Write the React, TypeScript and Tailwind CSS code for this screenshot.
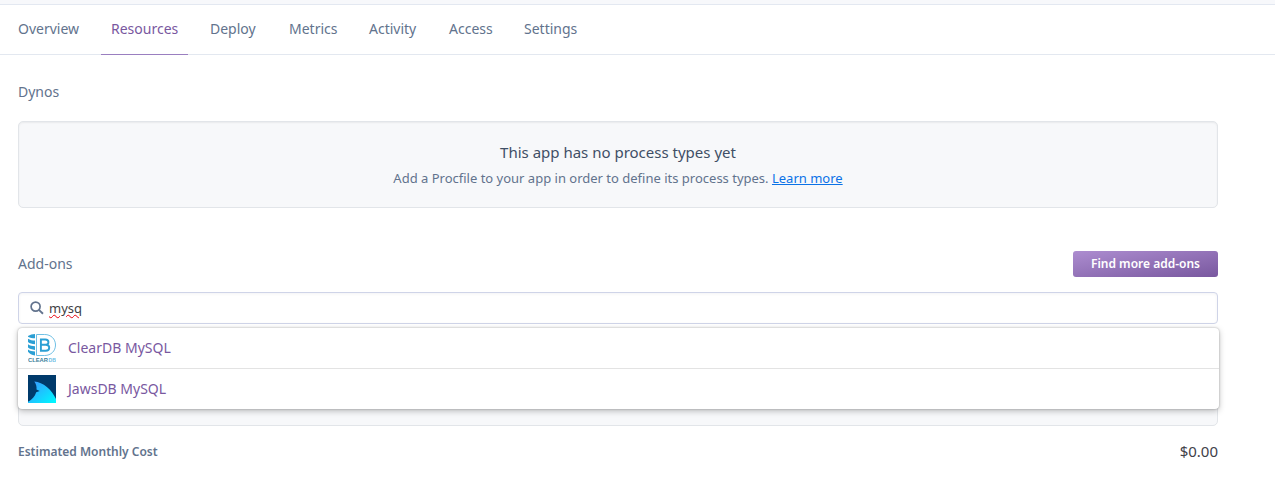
import React from "react";

const tabs = [
  { label: "Overview", width: "w-[61px]" },
  { label: "Resources", width: "w-[67px]", active: true },
  { label: "Deploy", width: "w-[47px]" },
  { label: "Metrics", width: "w-12" },
  { label: "Activity", width: "w-12" },
  { label: "Access", width: "w-[43px]" },
  { label: "Settings", width: "w-[54px]" },
];

function SearchIcon() {
  return (
    <svg className="h-3.5 w-3.5 shrink-0" viewBox="0 0 14 14" fill="none" stroke="#62738d" strokeWidth="1.7">
      <circle cx="5.6" cy="5.6" r="4.5" />
      <path d="M8.9 8.9 13 12.8" strokeWidth="1.9" />
    </svg>
  );
}

function ClearDbLogo() {
  return (
    <svg className="h-7 w-7 shrink-0" viewBox="0 0 28 28">
      <path d="M7 0v4.3C4.500 4.300 2 3.800 0 2.800V2C2 .8 4.500 0 7 0ZM0 4.800c2 1.300 4.500 1.800 7 1.800v3.700C4 10.200 1.500 9.300 0 8ZM0 10.200c2 1.400 4.500 1.900 7 2v3.700c-3-.1-5.500-1-7-2.300ZM0 15.600c2 1.400 4.500 1.900 7 2v4C4 21.200 1.300 19.500 0 17.800Z" fill="#2b9fd4" />
      <path d="M8.500.5h8.200C23 .5 27.500 5 27.500 11S23 21.500 16.700 21.500H8.500Z" fill="none" stroke="#70c0e5" />
      <path d="M12.900 5.500h4.400c4.200 0 4.200 5.300 0 5.300h-4.400Zm0 5.300h4.800c4.700 0 4.700 6 0 6h-4.800Z" fill="none" stroke="#2b9fd4" strokeWidth="1.900" />
      <text x="0" y="27.800" textLength="20" lengthAdjust="spacingAndGlyphs" fontSize="4.800" fontWeight="700" fill="#3d7f9c" className="font-['Liberation_Sans',sans-serif]">CLEAR</text>
      <text x="20.500" y="27.800" textLength="7.500" lengthAdjust="spacingAndGlyphs" fontSize="4.800" fontWeight="700" fill="#70c0e5" className="font-['Liberation_Sans',sans-serif]">DB</text>
    </svg>
  );
}

function JawsDbLogo() {
  return (
    <svg className="h-7 w-7 shrink-0" viewBox="0 0 28 28">
      <defs>
        <linearGradient id="fin" x1="6" y1="6" x2="25" y2="28" gradientUnits="userSpaceOnUse">
          <stop stopColor="#369bff" />
          <stop offset="1" stopColor="#00f6ff" />
        </linearGradient>
      </defs>
      <path d="M0 0h28v28H0Z" fill="#003a6b" />
      <path d="M6.300 6.400C15 7 24 14.500 28 24v4H0v-1.300c4-2 7-5.500 8.200-9.500l3.500-1.200-3.200-1.400c.3-3-.3-5.600-2.200-8.200Z" fill="url(#fin)" />
    </svg>
  );
}

export default function App() {
  return (
    <div className="h-[477px] overflow-hidden bg-white font-['Noto_Sans',sans-serif] text-sm text-[#62738d]">
      <div className="h-[5px] border-b border-[#e3e8f1] bg-[#f7f8fb]" />
      <nav className="flex h-[50px] gap-3 border-b border-[#e3e8f0] pl-2">
        {tabs.map((tab) => (
          <a
            key={tab.label}
            className={
              tab.active
                ? "-mb-px border-b border-[#9a7fc0] px-2.5 pt-[14px] leading-5 text-[#79589f]"
                : "px-2.5 pt-[14px] leading-5"
            }
          >
            <span className={`block whitespace-nowrap ${tab.width}`}>{tab.label}</span>
          </a>
        ))}
      </nav>

      <main className="ml-[18px] w-[1200px]">
        <h2 className="pt-[27px] leading-5">Dynos</h2>
        <section className="mt-[19px] h-[87px] rounded-[5px] border border-[#e2e5e9] bg-[#f7f8fa] pt-[19px] text-center shadow-[inset_0_1px_2px_rgba(0,0,0,0.06)]">
          <p className="text-[15px] leading-[22px] text-[#3f4f66]">This app has no process types yet</p>
          <p className="mt-[5px] text-[13px] leading-5">
            Add a Procfile to your app in order to define its process types.{" "}
            <a className="text-[#0b72e7] underline">Learn more</a>
          </p>
        </section>

        <header className="mt-[43px] flex h-[26px] items-center justify-between">
          <h2>Add-ons</h2>
          <button className="h-[26px] w-[145px] rounded-[3px] bg-linear-to-br from-[#ad8dd0] to-[#79589f] text-xs font-semibold whitespace-nowrap text-white">
            Find more add-ons
          </button>
        </header>

        <div className="relative mt-[15px]">
          <div className="flex h-8 items-center rounded-[4px] border border-[#cfd4e8] pl-[11px] shadow-[inset_0_1px_3px_rgba(50,50,93,0.06)]">
            <SearchIcon />
            <span className="ml-[5px] text-[13px] text-[#3f3f44] underline decoration-red-600 decoration-wavy decoration-1">mysq</span>
          </div>
          <div className="absolute top-9 left-0 z-10 w-[1201px] rounded-[4px] bg-white shadow-[0_0_2px_rgba(0,0,0,0.3),0_2px_6px_rgba(0,0,0,0.25)]">
            <div className="flex h-[41px] items-center border-b border-[#e3e3e3] pl-2.5 text-[#79589f]">
              <ClearDbLogo />
              <span className="ml-3">ClearDB MySQL</span>
            </div>
            <div className="flex h-10 items-center pl-2.5 text-[#79589f]">
              <JawsDbLogo />
              <span className="ml-3">JawsDB MySQL</span>
            </div>
          </div>
        </div>

        <div className="mt-4 h-[86px] rounded-[5px] border border-[#e2e5e9] bg-[#f7f8fa]" />
        <footer className="mt-[14px] flex h-6 items-center justify-between">
          <span className="text-xs font-semibold">Estimated Monthly Cost</span>
          <span className="text-[15px] text-[#3f4149]">$0.00</span>
        </footer>
      </main>
    </div>
  );
}
